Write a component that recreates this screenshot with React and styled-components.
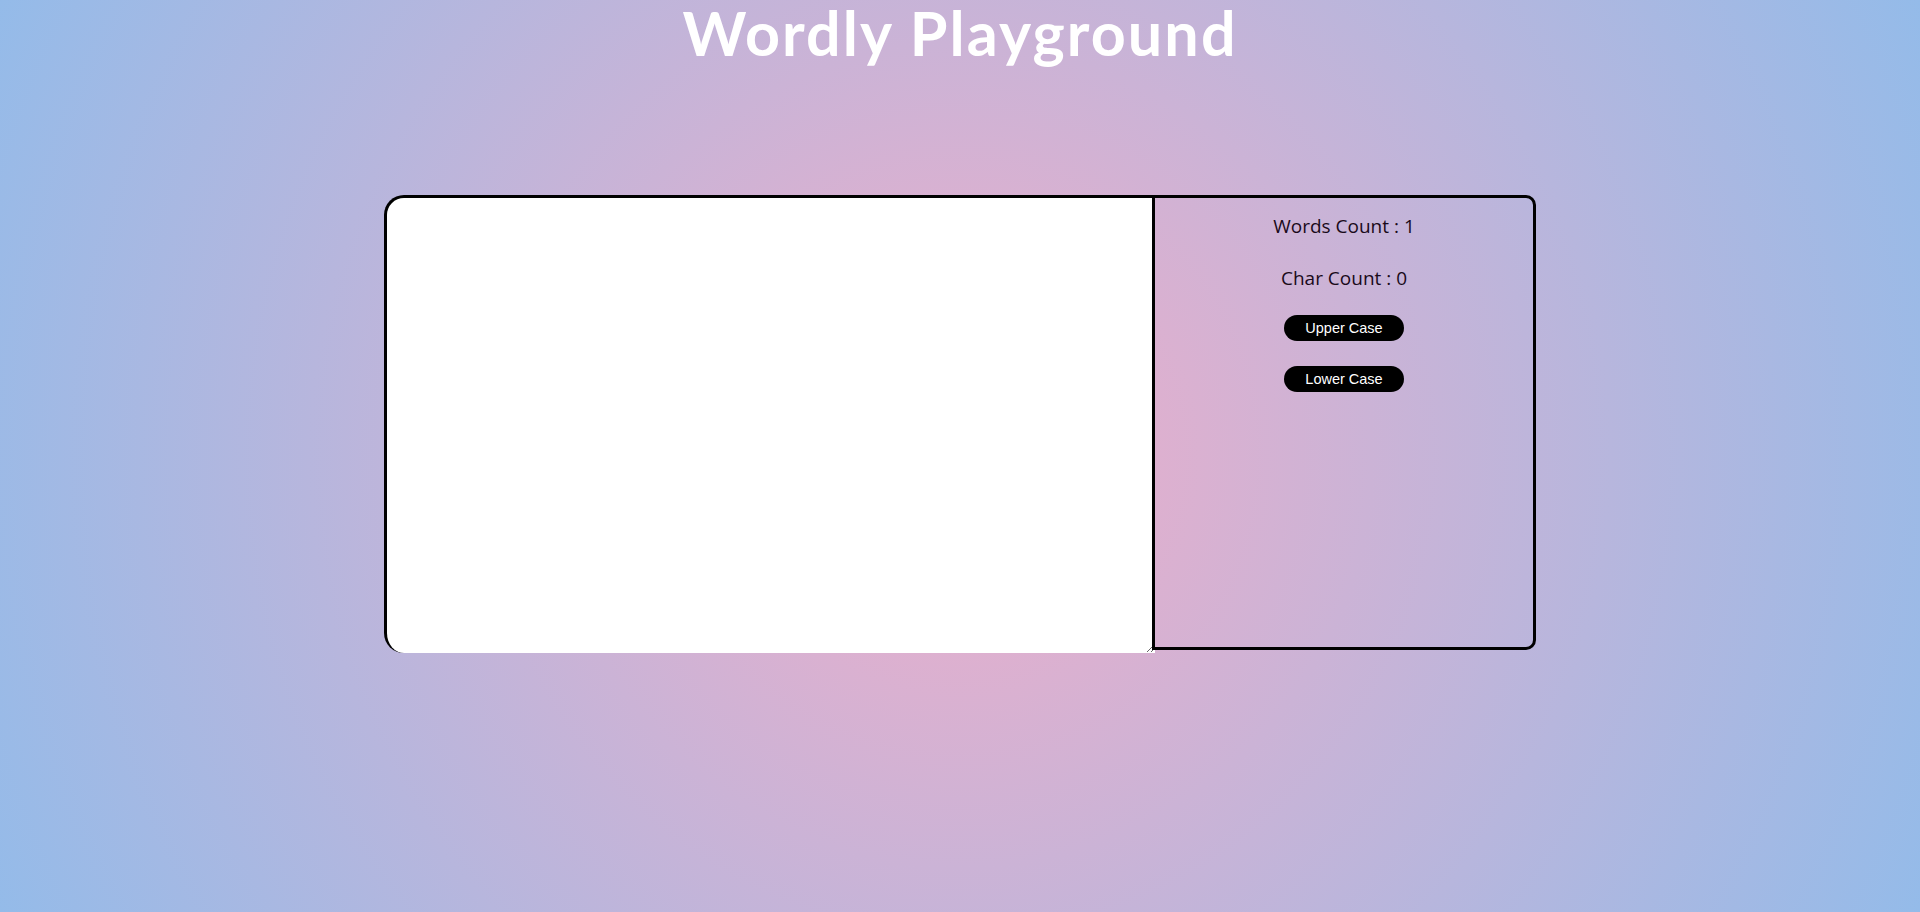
import * as React from "react"
import styled, { createGlobalStyle } from "styled-components"

const GlobalStyle = createGlobalStyle`
  html, body {
    margin: 0;
    padding: 0;
  }
  body {
    min-height: 100vh;
    background: radial-gradient(circle, #eeaeca 0%, #94bbe9 100%);
    background-attachment: fixed;
  }
`

const Page = styled.div`
  min-height: 100vh;
  display: flex;
  flex-direction: column;
  align-items: center;
`

const Title = styled.h1`
  margin: 0;
  font-family: "Lato", sans-serif;
  font-weight: 700;
  font-size: 61px;
  line-height: 66px;
  letter-spacing: 2.1px;
  color: #fff;
  text-align: center;
`

const Editor = styled.div`
  display: flex;
  align-items: flex-start;
  width: 1152px;
  margin-top: 129px;
`

const TextBox = styled.textarea`
  box-sizing: border-box;
  width: 771px;
  height: 458px;
  flex-shrink: 0;
  border: none;
  border-top: 3px solid #000;
  border-left: 3px solid #000;
  border-radius: 20px 0 0 20px;
  background: #fff;
  outline: none;
  padding: 8px;
  font-family: "Open Sans", sans-serif;
  font-size: 16px;
`

const Stats = styled.div`
  box-sizing: border-box;
  width: 384px;
  height: 455px;
  margin-left: -3px;
  border: 3px solid #000;
  border-radius: 0 10px 10px 0;
  display: flex;
  flex-direction: column;
  align-items: center;
  padding-top: 16px;
  font-family: "Open Sans", "Noto Sans", sans-serif;
`

const Stat = styled.p`
  margin: 0 0 ${p => p.$gap}px;
  font-size: 19px;
  line-height: 24px;
  color: #1a0a1a;
`

const CaseButton = styled.button`
  width: 120px;
  height: 26px;
  margin-bottom: 25px;
  padding: 0;
  border: none;
  border-radius: 13px;
  background: #000;
  color: #fff;
  font-family: "Liberation Sans", Arial, sans-serif;
  font-size: 14.5px;
  cursor: pointer;
`

export default function App() {
  const [text, setText] = React.useState("")
  const words = text.split(" ").length
  return (
    <Page>
      <GlobalStyle />
      <Title>Wordly Playground</Title>
      <Editor>
        <TextBox value={text} onChange={e => setText(e.target.value)} />
        <Stats>
          <Stat $gap={28}>Words Count : {words}</Stat>
          <Stat $gap={25}>Char Count : {text.length}</Stat>
          <CaseButton onClick={() => setText(text.toUpperCase())}>Upper Case</CaseButton>
          <CaseButton onClick={() => setText(text.toLowerCase())}>Lower Case</CaseButton>
        </Stats>
      </Editor>
    </Page>
  )
}
